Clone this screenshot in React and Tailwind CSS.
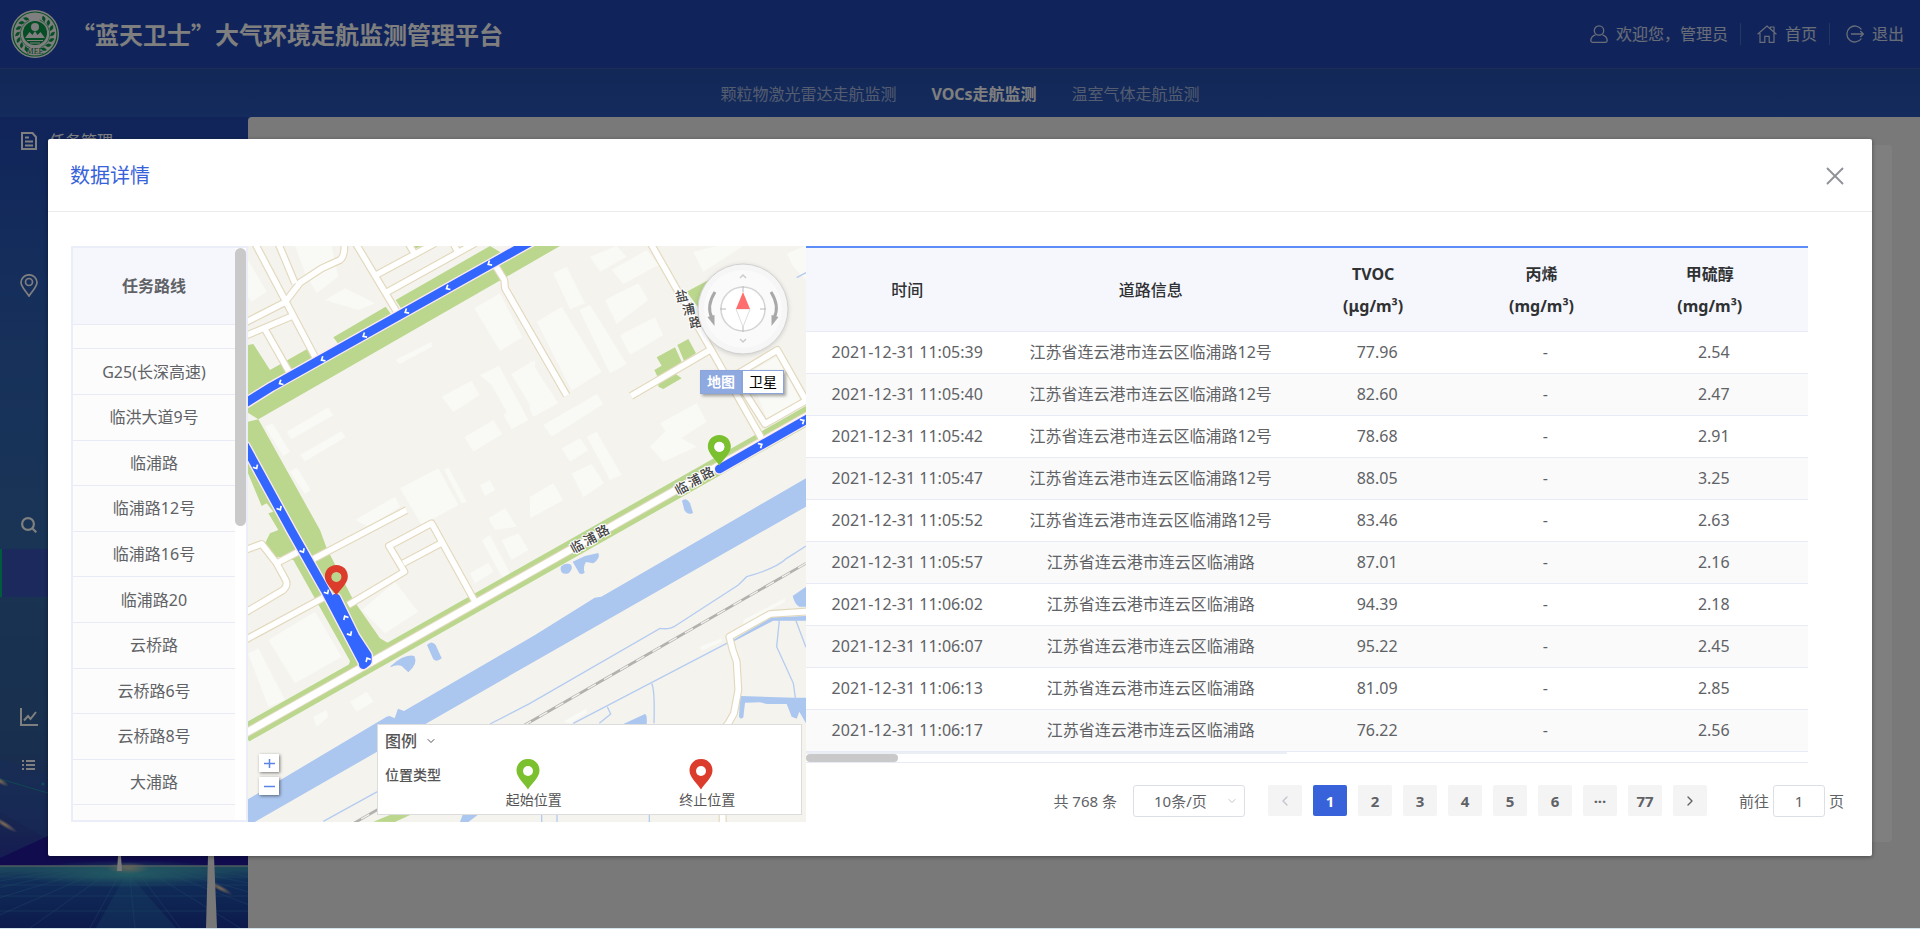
import { ChevronDown, ChevronLeft, ChevronRight, X } from "lucide-react"
import clsx from "clsx"

const tabs = ["颗粒物激光雷达走航监测", "VOCs走航监测", "温室气体走航监测"]

const routes = [
  "G25(长深高速)",
  "临洪大道9号",
  "临浦路",
  "临浦路12号",
  "临浦路16号",
  "临浦路20",
  "云桥路",
  "云桥路6号",
  "云桥路8号",
  "大浦路",
]

const records = [
  ["2021-12-31 11:05:39", "江苏省连云港市连云区临浦路12号", "77.96", "-", "2.54"],
  ["2021-12-31 11:05:40", "江苏省连云港市连云区临浦路12号", "82.60", "-", "2.47"],
  ["2021-12-31 11:05:42", "江苏省连云港市连云区临浦路12号", "78.68", "-", "2.91"],
  ["2021-12-31 11:05:47", "江苏省连云港市连云区临浦路12号", "88.05", "-", "3.25"],
  ["2021-12-31 11:05:52", "江苏省连云港市连云区临浦路12号", "83.46", "-", "2.63"],
  ["2021-12-31 11:05:57", "江苏省连云港市连云区临浦路", "87.01", "-", "2.16"],
  ["2021-12-31 11:06:02", "江苏省连云港市连云区临浦路", "94.39", "-", "2.18"],
  ["2021-12-31 11:06:07", "江苏省连云港市连云区临浦路", "95.22", "-", "2.45"],
  ["2021-12-31 11:06:13", "江苏省连云港市连云区临浦路", "81.09", "-", "2.85"],
  ["2021-12-31 11:06:17", "江苏省连云港市连云区临浦路", "76.22", "-", "2.56"],
]

const columns = [
  { title: "时间" },
  { title: "道路信息" },
  { title: "TVOC", unit: "(μg/m³)" },
  { title: "丙烯", unit: "(mg/m³)" },
  { title: "甲硫醇", unit: "(mg/m³)" },
]

const pages = ["1", "2", "3", "4", "5", "6", "···", "77"]

/* ---------- icons ---------- */

function Emblem() {
  const leaves = [-150, -130, -110, -90, -70, -50, -30, 30, 50, 70, 90, 110, 130, 150]
  return (
    <svg viewBox="0 0 48 48" className="size-12">
      <circle cx="24" cy="24" r="24" fill="#fff" />
      <circle cx="24" cy="24" r="22" fill="none" stroke="#0b9a4b" strokeWidth="1.2" />
      {leaves.map((a) => (
        <g key={a} transform={`rotate(${a} 24 24)`}>
          <path d="M22 4.500q4 0 4 4q-4 0-4-4M21 9.500h5" fill="#0b9a4b" stroke="#0b9a4b" strokeWidth=".6" />
        </g>
      ))}
      <circle cx="24" cy="23" r="12" fill="#0b9a4b" />
      <circle cx="24" cy="17" r="4" fill="#fff" />
      <path d="M14 28l4.500-6 3 3 2.500-4 2.500 4 3-3 4.500 6z" fill="#fff" />
      <path d="M16 30.500h16M19 33h10" stroke="#fff" strokeWidth="1.200" />
      <text x="24" y="44" textAnchor="middle" fontSize="8" fontFamily="Liberation Serif" fill="#0b7a3b">
        MEE
      </text>
    </svg>
  )
}

function UserIcon() {
  return (
    <svg viewBox="0 0 18 18" className="size-[18px]" fill="none" stroke="currentColor" strokeWidth="1.300">
      <circle cx="9" cy="5.500" r="4.700" />
      <path d="M5.500 9.800C2.500 10.800.8 13 .8 15.500c0 1.200.6 1.800 1.700 1.800h13c1.100 0 1.700-.6 1.700-1.800 0-2.500-1.700-4.700-4.700-5.700" />
    </svg>
  )
}

function HomeIcon() {
  return (
    <svg viewBox="0 0 20 18" className="h-[18px] w-5" fill="none" stroke="currentColor" strokeWidth="1.200">
      <path d="M.6 9.300L10 1l9.400 8.300M3 8v9.300h4.800v-6h4.400v6H17V8M13.500 3.500V2H17v5" />
    </svg>
  )
}

function ExitIcon() {
  return (
    <svg viewBox="0 0 18 18" className="size-[18px]" fill="none" stroke="currentColor" strokeWidth="1.300">
      <path d="M15.500 4.500A8 8 0 1 0 15.500 13.500M5 9h12M14.300 6L17.300 9l-3 3" />
    </svg>
  )
}

function DocIcon() {
  return (
    <svg viewBox="0 0 18 18" className="size-[18px]" fill="none" stroke="currentColor" strokeWidth="2">
      <path d="M2 1h10.500L16 5v12H2zM5 5.500h4M5 9.500h8M5 13.500h8" />
    </svg>
  )
}

function PlaceIcon() {
  return (
    <svg viewBox="0 0 18 23" className="h-[23px] w-[18px]" fill="none" stroke="currentColor" strokeWidth="1.700">
      <path d="M9 22C6 17 1 13 1 8.500a8 7.700 0 0 1 16 0C17 13 12 17 9 22z" />
      <circle cx="9" cy="8" r="3.500" />
    </svg>
  )
}

function SearchIcon() {
  return (
    <svg viewBox="0 0 16 16" className="size-4" fill="none" stroke="currentColor" strokeWidth="2.200">
      <circle cx="7" cy="7" r="5.900" />
      <path d="M11 11l4.300 4.300" />
    </svg>
  )
}

function TrendIcon() {
  return (
    <svg viewBox="0 0 18 18" className="size-[18px]" fill="none" stroke="currentColor" strokeWidth="2">
      <path d="M1 0v17h17M4 12.500L8 8l2.500 3L16 4" />
    </svg>
  )
}

function ListIcon() {
  return (
    <svg viewBox="0 0 13 10" className="h-[10px] w-[13px]" stroke="currentColor" strokeWidth="2">
      <path d="M0 1h2M4 1h9M0 5h2M4 5h9M0 9h2M4 9h9" />
    </svg>
  )
}

// One slot per menu row; expanded children have no icon
const menu = [
  { icon: DocIcon, label: "任务管理" },
  {},
  {},
  { icon: PlaceIcon },
  {},
  {},
  {},
  {},
  { icon: SearchIcon },
  { active: true },
  {},
  {},
  { icon: TrendIcon },
  { icon: ListIcon },
]

/* ---------- page shell ---------- */

function Header() {
  return (
    <header className="flex h-[69px] shrink-0 items-center border-b border-[#3a5bab] bg-[#2048b6] pr-4 pl-[11px] text-white">
      <Emblem />
      <h1 className="ml-3 font-['Noto_Sans_CJK_SC',sans-serif] text-2xl font-bold">“蓝天卫士”大气环境走航监测管理平台</h1>
      <nav className="ml-auto flex items-center text-base text-white/80">
        <a href="#user" className="flex items-center gap-2">
          <UserIcon />
          欢迎您，管理员
        </a>
        <span className="mr-4 ml-3 h-[22px] w-px bg-white/20" />
        <a href="#home" className="flex items-center gap-2">
          <HomeIcon />
          首页
        </a>
        <span className="mr-4 ml-3 h-[22px] w-px bg-white/20" />
        <a href="#logout" className="flex items-center gap-2">
          <ExitIcon />
          退出
        </a>
      </nav>
    </header>
  )
}

function TabBar() {
  return (
    <nav className="flex h-12 shrink-0 items-center justify-center gap-[35px] bg-linear-to-b from-[#2450ae] to-[#2856ba] pt-0.5 text-base">
      {tabs.map((tab, i) => (
        <a key={tab} href="#tab" className={clsx(i === 1 ? "font-bold text-white" : "text-white/60")}>
          {tab}
        </a>
      ))}
    </nav>
  )
}

function SidebarArt() {
  return (
    <svg viewBox="0 0 248 200" className="absolute inset-x-0 bottom-0 h-[200px] w-full" preserveAspectRatio="none">
      <defs>
        <linearGradient id="ground" x1="0" y1="0" x2="0" y2="1">
          <stop offset="0" stopColor="#3c96b4" />
          <stop offset=".25" stopColor="#2058b0" />
          <stop offset="1" stopColor="#1a3698" />
        </linearGradient>
        <radialGradient id="glow">
          <stop offset="0" stopColor="#ffd9b0" />
          <stop offset="1" stopColor="#ffd9b0" stopOpacity="0" />
        </radialGradient>
        <radialGradient id="teal">
          <stop offset="0" stopColor="#48b8c8" />
          <stop offset="1" stopColor="#48b8c8" stopOpacity="0" />
        </radialGradient>
        <linearGradient id="dusk" x1="0" y1="0" x2="0" y2="1">
          <stop offset="0" stopColor="#3460b0" stopOpacity="0" />
          <stop offset="1" stopColor="#2a34a4" />
        </linearGradient>
      </defs>
      <rect width="248" height="138" fill="url(#dusk)" />
      <path d="M0 32l48 14v65L0 84z" fill="#2d58b0" opacity=".5" />
      <path d="M0 130l48-22 80 14h120v16H0z" fill="#20189c" />
      <path d="M0 51l48 14" stroke="#1f8fa8" />
      <circle cx="43" cy="56" r="1.500" fill="#1f9fb8" />
      <ellipse cx="0" cy="53" rx="10" ry="3" fill="url(#glow)" transform="rotate(30 0 53)" />
      <ellipse cx="4" cy="96" rx="16" ry="3" fill="url(#glow)" transform="rotate(32 4 96)" />
      <rect y="138" width="248" height="62" fill="url(#ground)" />
      {[-700, -520, -380, -270, -180, -100, -30, 30, 90, 135, 180, 240, 310, 380, 470, 600, 800].map((x) => (
        <path key={x} d={`M${128 + (x - 128) * 0.12} 139L${x} 200`} stroke="#3f8fd0" strokeWidth=".7" opacity=".6" />
      ))}
      <path d="M0 143h248M0 149h248M0 157h248M0 168h248M0 183h248" stroke="#3f8fd0" strokeWidth=".7" opacity=".6" />
      <path d="M96 200L124 150h8l44 50z" fill="#2f86c8" opacity=".35" />
      <ellipse cx="128" cy="146" rx="110" ry="14" fill="url(#teal)" />
      <path d="M0 138h248" stroke="#9ab8c0" strokeWidth="1.500" />
      <ellipse cx="128" cy="140" rx="22" ry="6" fill="url(#glow)" opacity=".7" />
      <ellipse cx="220" cy="160" rx="14" ry="3" fill="url(#glow)" transform="rotate(28 220 160)" />
      <path d="M118 128h3l1 15h-5z" fill="#f4f4f4" />
      <path d="M208 128h6l3 72h-11z" fill="#f0f0f0" />
    </svg>
  )
}

function Sidebar() {
  return (
    <aside className="relative w-[248px] shrink-0 overflow-hidden bg-linear-to-b from-[#2048b4] via-[#3474d6] via-52% to-[#3460b0] to-90%">
      <div className="absolute inset-0 bg-linear-to-b from-transparent via-[#32649c]/80 via-55% to-[#32568c]/80" />
      <SidebarArt />
      <ul className="relative text-base text-white">
        {menu.map(({ icon: Icon, label, active }, i) => (
          <li key={i} className={clsx("flex h-12 items-center", active && "border-l-2 border-[#00b478] bg-[#3652b8]")}>
            <span className="ml-2 flex w-[41px] justify-center">{Icon && <Icon />}</span>
            {label}
          </li>
        ))}
      </ul>
    </aside>
  )
}

/* ---------- map ---------- */

// Map drawing uses 3 units per screen pixel, cut in four quadrants
const origin = {
  nw: "translate(-9 -18)",
  ne: "translate(846 -18)",
  sw: "translate(-9 852)",
  se: "translate(846 852)",
}

const buildings = [
  ["nw", "M9 60L65 155L20 185L9 170z"],
  ["nw", "M150 18H260L280 110L215 160L180 100z"],
  ["nw", "M240 180L300 145L390 190L340 210z"],
  ["nw", "M688 205L765 160L832 292L765 333z"],
  ["nw", "M590 470L680 422L704 465L625 516z"],
  ["nw", "M705 405L762 377L850 540L800 568L775 525L785 515L740 435z"],
  ["nw", "M798 402L870 360V520z"],
  ["nw", "M658 592L745 540L772 582L685 635z"],
  ["nw", "M465 745L580 685L640 795L530 855z"],
  ["nw", "M598 690L610 682L665 785L650 790z"],
  ["nw", "M125 575L250 502L265 525L140 598z"],
  ["nw", "M165 645L290 573L302 592L180 664z"],
  ["nw", "M60 560L82 550L135 635L115 648z"],
  ["nw", "M135 695L155 682L197 750L180 762z"],
  ["nw", "M450 360L560 305V320L465 372z"],
  ["nw", "M330 840L450 770L465 800L370 860z"],
  ["nw", "M705 735L735 720L750 750L720 768z"],
  ["nw", "M730 835L780 805L815 860L750 870z"],
  ["ne", "M70 100L110 80L165 190L120 208z"],
  ["ne", "M180 50L260 18L290 50L210 95z"],
  ["ne", "M245 90L350 30L385 75L280 132z"],
  ["ne", "M225 180L325 130L355 180L260 252z"],
  ["ne", "M20 245L95 200L215 395L125 452z"],
  ["ne", "M148 210L180 195L290 372L240 400z"],
  ["ne", "M270 285L375 232L400 285L300 345z"],
  ["ne", "M0 360L85 490L10 530L0 510z"],
  ["ne", "M40 555L200 462L220 492L65 590z"],
  ["ne", "M490 35L560 18H640L520 95z"],
  ["ne", "M390 550L500 490L530 545L430 610z"],
  ["ne", "M170 590L200 575L275 705L240 720z"],
  ["ne", "M95 625L150 595L175 630L120 665z"],
  ["ne", "M125 700L185 672L222 730L160 772z"],
  ["ne", "M0 770L70 730L100 780L0 835z"],
  ["ne", "M360 620L410 570L500 620L400 665z"],
  ["ne", "M655 400L740 350L810 480L710 535z"],
  ["ne", "M770 40L828 18V120L790 80z"],
  ["sw", "M9 370L40 355L120 510L70 530z"],
  ["sw", "M70 330L210 245L290 380L150 460z"],
  ["sw", "M315 515L365 485L385 515L335 545z"],
  ["sw", "M350 240L450 155L520 245L420 310z"],
  ["sw", "M675 130L730 98L745 125L690 160z"],
  ["sw", "M710 30L735 15L795 130L770 140z"],
  ["sw", "M770 30L820 10L850 60L800 90z"],
  ["sw", "M205 560L245 540L250 560L215 590z"],
  ["se", "M640 270L765 205V215L640 285z"],
  ["se", "M510 350L575 325V335L515 362z"],
  ["se", "M100 575L170 535V548L120 580z"],
]

const parks = [
  ["nw", "M9 518L40 538L945 18H809L9 468z"],
  ["nw", "M265 292L422 200L440 225L280 312z"],
  ["nw", "M452 180L735 18L769 38L470 208z"],
  ["nw", "M9 315L25 312L75 390L185 328L204 353L9 468z"],
  ["nw", "M505 18H530L510 26z"],
  [
    "nw",
    "M9 545L40 538L225 870L245 925L325 1080L405 1195L430 1210L409 1258L339 1308L310 1280L315 1263L145 960L100 950L85 962L66 935L60 910L75 880L100 870L70 820L85 815L65 790L50 798L9 700z",
  ],
  ["ne", "M470 155L540 118V200L510 210z"],
  ["ne", "M380 352L435 322L455 365L420 390L455 415L400 447L385 440V415L373 390L395 377z"],
  ["ne", "M442 315L475 297L498 340L462 362z"],
  ["ne", "M660 600L828 498V545L680 620z"],
  ["sw", "M385 875L440 853H500L450 876z"],
]

const water = [
  [
    "sw",
    "M9 808L425 560L434 558L449 565L459 536L477 543L870 315L1030 215L1049 203L1069 200L1683 -155V-70L855 402L29 876H9z",
  ],
  ["sw", "M437 408Q480 370 508 378Q520 400 490 427L470 408Q455 402 437 412z"],
  ["sw", "M546 345Q560 330 572 345L590 385Q575 398 565 388z"],
  ["ne", "M456 782Q468 770 480 790L489 818Q475 828 463 810z"],
  ["se", "M92 112Q100 98 120 102Q132 112 118 128Q98 138 92 120z"],
  ["se", "M128 95L165 78L205 69Q212 85 190 100L168 96Q158 110 164 128Q155 135 148 130z"],
  ["se", "M280 582L345 552Q352 552 350 582z"],
  ["se", "M828 170L788 198Q795 225 808 230H828z"],
  ["se", "M630 498L790 503L828 503V580L808 545L800 566L785 560L770 522L710 522L690 517L645 518L640 562Q632 570 627 560z"],
  ["se", "M600 335L725 262L828 258V272H730L612 334z"],
  ["sw", "M645 876L655 850H705L670 876z"],
]

const streams = [
  ["se", "M-120 582L0 520L390 295Q420 300 440 285L625 165L650 140Q740 115 770 85L828 48"],
  ["se", "M-620 874L-458 785M130 580L600 335"],
  ["se", "M365 460Q375 480 372 580M232 530L242 552L208 580"],
  ["se", "M748 270L740 350L790 460L797 510M797 270L828 352"],
  ["se", "M35 854V876M81 854V876M358 854V876"],
  ["ne", "M800 113L828 98"],
  ["sw", "M9 577L50 555"],
]

const roads = [
  ["nw", "M30 10L215 360"],
  ["nw", "M100 10L150 130"],
  ["nw", "M0 248L120 187L165 128L230 85L285 60Q300 48 298 10"],
  ["nw", "M0 288L138 230"],
  ["nw", "M60 268L135 400"],
  ["nw", "M332 10L455 215"],
  ["nw", "M392 106L570 10M420 160L690 10M490 10L508 40M625 10L640 40"],
  ["nw", "M752 78L778 120L780 145L965 466"],
  ["ne", "M362 10L700 605"],
  ["ne", "M303 468L540 330"],
  ["ne", "M625 400L742 330L828 482L705 552L640 450"],
  ["sw", "M205 87L485 -60"],
  ["sw", "M310 225L478 125L432 48L560 -20L690 215M475 100L588 40"],
  ["sw", "M0 60L50 42L95 100L160 65M95 100L122 150Q130 165 115 180L0 248"],
  ["sw", "M0 330L235 203"],
  ["se", "M840 244L720 252L598 320L608 360L620 395L625 480L612 550L595 580L578 600V880"],
]

const chevrons = [
  ["nw", 733, 71, 150],
  ["nw", 608, 144, 150],
  ["nw", 484, 215, 150],
  ["nw", 358, 287, 150],
  ["nw", 233, 358, 150],
  ["nw", 107, 429, 150],
  ["nw", 33, 682, 60],
  ["nw", 104, 806, 60],
  ["sw", 173, 63, 60],
  ["sw", 246, 187, 60],
  ["sw", 315, 312, 60],
  ["sw", 301, 262, -118],
  ["sw", 368, 388, -118],
  ["ne", 692, 615, -30],
  ["ne", 818, 543, -30],
]

const roadLabels = [
  ["ne", "盐", 455, 168, -12],
  ["ne", "浦", 476, 208, -12],
  ["ne", "路", 496, 247, -12],
  ["ne", "临", 455, 745, -28],
  ["ne", "浦", 494, 722, -28],
  ["ne", "路", 532, 700, -28],
  ["se", "临", 141, 50, -28],
  ["se", "浦", 180, 27, -28],
  ["se", "路", 218, 4, -28],
]

const PIN = "M12 0C5.200 0 .5 5 .5 11.500C.5 19 9 25 12 30.500C15 25 23.500 19 23.500 11.500C23.500 5 18.800 0 12 0z"

function Pin({ color }) {
  return (
    <svg viewBox="0 0 24 31" className="h-[31px] w-6">
      <path d={PIN} fill={color} />
      <circle cx="12" cy="12" r="5" fill="#fff" />
    </svg>
  )
}

function Shapes({ items, ...rest }) {
  return (
    <g {...rest}>
      {items.map(([tile, d]) => (
        <path key={tile + d} d={d} transform={origin[tile]} />
      ))}
    </g>
  )
}

function MapCanvas() {
  const track = (
    <>
      <path d="M-9 472L71 422L870 -25" />
      <path d="M-9 600L129 852L231 1032L346 1250" />
      <path d="M264 1056L320 1170L358 1228V1246L346 1256" />
      <path d="M1414 669L1690 512" />
    </>
  )
  return (
    <svg viewBox="0 0 1674 1728" className="size-full" preserveAspectRatio="xMidYMid slice">
      <rect width="1674" height="1728" fill="#f5f3ee" />
      <Shapes items={buildings} fill="#f9faf5" />
      <Shapes items={parks} fill="#bad78d" />
      <Shapes items={water} fill="#abc6ef" />
      <Shapes items={streams} fill="none" stroke="#b4ccf0" strokeWidth="4" />
      <path d="M291 1747L1674 952" stroke="#b3b1ae" strokeWidth="8" />
      <path d="M291 1747L1674 952" stroke="#f3f1ee" strokeWidth="4" strokeDasharray="28 28" />
      <path d="M-10 1463L1684 506" stroke="#bad78d" strokeWidth="54" />
      <Shapes items={roads} fill="none" stroke="#e2d9bd" strokeWidth="24" strokeLinejoin="round" />
      <path d="M-10 1463L1684 506" stroke="#e2d9bd" strokeWidth="27" />
      <Shapes items={roads} fill="none" stroke="#fff" strokeWidth="17" strokeLinejoin="round" />
      <path d="M-10 1463L1684 506" stroke="#fff" strokeWidth="21" />
      <g fill="none" strokeLinecap="round" strokeLinejoin="round">
        <g stroke="#fce9f4" strokeWidth="34">
          {track}
        </g>
        <g stroke="#3366ff" strokeWidth="26">
          {track}
        </g>
      </g>
      {chevrons.map(([tile, x, y, angle]) => (
        <g key={`${tile}${x}`} transform={origin[tile]}>
          <path
            d="M-5 -8L4 0L-5 8"
            transform={`translate(${x} ${y}) rotate(${angle})`}
            fill="none"
            stroke="#fff"
            strokeWidth="5"
          />
        </g>
      ))}
      {roadLabels.map(([tile, char, x, y, angle]) => (
        <g key={`${tile}${x}`} transform={origin[tile]}>
          <text
            transform={`translate(${x} ${y}) rotate(${angle})`}
            y="14"
            textAnchor="middle"
            fontSize="39"
            fontWeight="500"
            fill="#444"
            stroke="#fff"
            strokeWidth="6"
            paintOrder="stroke"
          >
            {char}
          </text>
        </g>
      ))}
      <g fillRule="evenodd">
        <path d={`${PIN}M12 7a5 5 0 1 0 .01 0z`} transform="translate(1378 567) scale(3)" fill="#7bc02f" />
        <circle cx="1414" cy="602" r="15" fill="#fff" />
        <path d={`${PIN}M12 7a5 5 0 1 0 .01 0z`} transform="translate(229 957) scale(3)" fill="#dc3c2c" />
      </g>
    </svg>
  )
}

function Compass() {
  return (
    <svg viewBox="0 0 96 96" className="absolute top-[15px] right-[15px] size-24 drop-shadow-sm">
      <circle cx="48" cy="48" r="45" fill="#f6f6f6" stroke="#d0d0d0" />
      <circle cx="48" cy="48" r="39" fill="#fafafa" />
      <circle cx="48" cy="48" r="22" fill="#fff" stroke="#d4d4d4" strokeWidth="1.500" />
      <path d="M48 25v6M48 65v6M25 48h6M65 48h6" stroke="#b8b8b8" />
      <path d="M41 48h14l-7 18z" fill="#fff" stroke="#ddd" />
      <path d="M41 48h14L48 31z" fill="#ff6e6e" />
      <path d="M45 17l3-3 3 3M45 78l3 3 3-3" fill="none" stroke="#ccc" strokeWidth="1.500" />
      <path d="M20 31Q11 45 17 57" fill="none" stroke="#a8a8a8" strokeWidth="3" />
      <path d="M12.500 56l7-2v11z" fill="#a8a8a8" />
      <path d="M76 31Q85 45 79 57" fill="none" stroke="#a8a8a8" strokeWidth="3" />
      <path d="M83.500 56l-7-2v11z" fill="#a8a8a8" />
    </svg>
  )
}

function LegendItem({ color, label }) {
  return (
    <div className="flex flex-1 flex-col items-center">
      <div className="mr-3">
        <Pin color={color} />
      </div>
      <span className="text-sm leading-5">{label}</span>
    </div>
  )
}

function MapPanel() {
  return (
    <div className="relative overflow-hidden">
      <MapCanvas />
      <Compass />
      <div className="absolute top-[124px] right-[22px] flex text-sm shadow-[2px_2px_3px_rgba(0,0,0,0.35)]">
        <button className="h-6 border border-[#8ba4dc] bg-[#8ea8e0] px-[6px] leading-5 font-bold text-white">地图</button>
        <button className="h-6 border border-[#8ba4dc] bg-white px-[6px] leading-5 text-black">卫星</button>
      </div>
      <div className="absolute bottom-[27px] left-[11px] flex flex-col gap-[5px] text-[#5b84e8]">
        <button aria-label="放大" className="grid h-[18px] w-5 place-items-center bg-white shadow-[1px_1px_3px_rgba(0,0,0,0.5)]">
          <svg viewBox="0 0 11 11" className="size-[11px]" stroke="currentColor" strokeWidth="1.500">
            <path d="M5.500 1v9M0 5.500h11" />
          </svg>
        </button>
        <button aria-label="缩小" className="grid h-[18px] w-5 place-items-center bg-white shadow-[1px_1px_3px_rgba(0,0,0,0.5)]">
          <svg viewBox="0 0 11 11" className="size-[11px]" stroke="currentColor" strokeWidth="1.500">
            <path d="M0 5.500h11" />
          </svg>
        </button>
      </div>
      <div className="absolute right-1 bottom-[7px] h-[91px] w-[425px] border border-[#dcdcdc] bg-white px-[7px] pt-0.5 text-[#555]">
        <button className="flex items-center gap-2 text-base leading-7 font-medium">
          图例
          <ChevronDown className="size-3" strokeWidth={2} />
        </button>
        <div className="flex pt-1">
          <span className="mt-1 w-[62px] shrink-0 text-sm leading-6 font-medium">位置类型</span>
          <LegendItem color="#7bc02f" label="起始位置" />
          <LegendItem color="#dc3c2c" label="终止位置" />
        </div>
      </div>
    </div>
  )
}

/* ---------- dialog ---------- */

function RoutePanel() {
  return (
    <div className="flex overflow-hidden border-2 border-[#ebeef8] text-[#606266]">
      <div className="flex-1 bg-[#fcfcfc]">
        <h3 className="flex h-[77px] items-center justify-center border-b border-[#e8ebf6] bg-[#f5f7fd] text-base font-bold">
          任务路线
        </h3>
        <div className="h-6 border-b border-[#e8ebf6]" />
        <ul className="grid h-[456px] auto-rows-fr">
          {routes.map((route) => (
            <li key={route} className="flex items-center justify-center border-b border-[#e8ebf6] text-base">
              {route}
            </li>
          ))}
        </ul>
      </div>
      <div className="w-[11px] bg-white">
        <div className="h-[278px] rounded-md bg-[#c9c9c9]" />
      </div>
    </div>
  )
}

function DataTable() {
  return (
    <div className="mr-[41px] border-b border-[#e8ebf6]">
      <table className="w-full table-fixed text-center text-base">
        <colgroup>
          <col className="w-[20.2%]" />
          <col className="w-[28.4%]" />
          <col className="w-[16.8%]" />
          <col className="w-[16.8%]" />
          <col className="w-[16.8%]" />
          <col className="w-[1%]" />
        </colgroup>
        <thead>
          <tr className="h-[84px] border-t-2 border-b border-t-[#5c8df9] border-b-[#e8ebf6] bg-[#f5f7fd] text-[#303133]">
            {columns.map(({ title, unit }) => (
              <th key={title} className={clsx("p-0 leading-8", unit ? "pr-2 font-bold" : "font-medium")}>
                {title}
                {unit && <div>{unit}</div>}
              </th>
            ))}
            <th className="p-0" />
          </tr>
        </thead>
        <tbody>
          {records.map((record) => (
            <tr key={record[0]} className="h-[42px] border-b border-[#e8ebf6] text-[#606266] even:bg-[#fafafa]">
              {record.map((value, i) => (
                <td key={i} className="p-0 whitespace-nowrap">
                  {value}
                </td>
              ))}
              <td className="p-0" />
            </tr>
          ))}
        </tbody>
      </table>
      <div className="h-[2px] w-[48%] bg-[#ebeef5]" />
      <div className="h-2 w-[92px] rounded bg-[#c9c9c9]" />
    </div>
  )
}

function Pagination() {
  const button = "grid h-[31px] w-[34px] place-items-center rounded-xs bg-[#f4f4f5] font-bold"
  return (
    <div className="mt-[22px] flex items-center justify-end pr-[5px] text-[15px] text-[#606266]">
      <span>共 768 条</span>
      <div className="relative mr-[23px] ml-4">
        <select
          aria-label="每页条数"
          className="h-8 w-28 appearance-none rounded-[3px] border border-[#dcdfe6] bg-white pl-5"
        >
          <option>10条/页</option>
        </select>
        <ChevronDown className="pointer-events-none absolute top-[10px] right-[7px] size-3 text-[#c0c4cc]" />
      </div>
      <div className="flex gap-[11px]">
        <button aria-label="上一页" className={clsx(button, "text-[#c0c4cc]")}>
          <ChevronLeft className="size-4" />
        </button>
        {pages.map((page, i) => (
          <button key={page} className={clsx(button, i === 0 && "bg-[#3762d9]! text-white")}>
            {page}
          </button>
        ))}
        <button aria-label="下一页" className={button}>
          <ChevronRight className="size-4" />
        </button>
      </div>
      <label className="ml-8 flex items-center gap-1">
        前往
        <input
          type="text"
          defaultValue="1"
          className="h-8 w-[52px] rounded-[3px] border border-[#dcdfe6] bg-white text-center"
        />
        页
      </label>
    </div>
  )
}

function DetailDialog() {
  return (
    <section
      role="dialog"
      aria-labelledby="dialog-title"
      className="w-[95%] rounded-xs bg-white shadow-[0_1px_4px_rgba(0,0,0,0.4)]"
    >
      <header className="flex h-[73px] items-center justify-between border-b border-[#ebebeb] pt-0.5 pr-[22px] pl-[22px]">
        <h2 id="dialog-title" className="text-xl text-[#3762d9]">
          数据详情
        </h2>
        <button aria-label="关闭" className="text-[#909399]">
          <X className="size-[30px]" strokeWidth={1.5} />
        </button>
      </header>
      <div className="px-[23px] py-[34px]">
        <div className="grid h-[576px] grid-cols-[177px_558fr_1043fr]">
          <RoutePanel />
          <MapPanel />
          <div className="min-w-0">
            <DataTable />
            <Pagination />
          </div>
        </div>
      </div>
    </section>
  )
}

export default function App() {
  return (
    <div className="relative flex h-screen flex-col overflow-hidden font-['Noto_Sans','Noto_Sans_CJK_SC',sans-serif]">
      <Header />
      <TabBar />
      <div className="flex min-h-0 flex-1 bg-[#2856ba]">
        <Sidebar />
        <main className="flex-1 rounded-tl bg-[#f2f2f2] px-7 pt-7 pb-[86px]">
          <div className="h-full rounded bg-white" />
        </main>
      </div>
      <div className="h-px shrink-0 bg-[#d3e3ee]" />
      <div className="absolute inset-x-0 top-0 bottom-px flex items-start justify-center bg-black/50 pt-[15vh]">
        <DetailDialog />
      </div>
    </div>
  )
}
